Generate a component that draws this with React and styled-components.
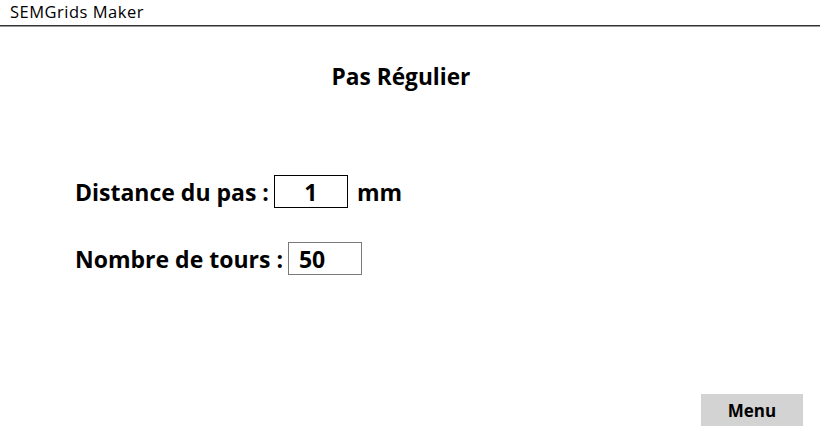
import React from 'react';
import styled, { createGlobalStyle } from 'styled-components';

const Global = createGlobalStyle`
  html, body { margin: 0; padding: 0; background: #fff; }
  body { font-family: "Open Sans", "Noto Sans", sans-serif; color: #000; }
`;

function Field({ label, value, align, unit, dark }) {
  return (
    <Row>
      <Label>{label}</Label>
      <Box align={align} dark={dark}>{value}</Box>
      {unit && <Unit>{unit}</Unit>}
    </Row>
  );
}

export default function App() {
  return (
    <Page>
      <Global />
      <TitleBar>SEMGrids Maker</TitleBar>
      <Content>
        <Heading>Pas Régulier</Heading>
        <Form>
          <Field label="Distance du pas :" value="1" align="center" unit="mm" dark />
          <Field label="Nombre de tours :" value="50" align="left" />
        </Form>
        <Footer>
          <MenuButton>Menu</MenuButton>
        </Footer>
      </Content>
    </Page>
  );
}

const Page = styled.div`
  width: 820px;
  height: 440px;
  display: flex;
  flex-direction: column;
  overflow: hidden;
`;

const TitleBar = styled.div`
  height: 26px;
  box-sizing: border-box;
  padding: 1px 0 0 10px;
  font-size: 16.5px;
  letter-spacing: 0.5px;
  line-height: 21px;
  border-bottom: 1px solid #333;
  box-shadow: 0 1px 0 #999;
`;

const Content = styled.div`
  flex: 1;
  display: flex;
  flex-direction: column;
`;

const Heading = styled.h1`
  margin: 37px 0 0;
  padding-right: 18px;
  text-align: center;
  font-size: 22.7px;
  line-height: 28px;
  font-weight: 700;
`;

const Form = styled.div`
  margin-top: 84px;
  padding-left: 75px;
  display: flex;
  flex-direction: column;
  gap: 34px;
`;

const Row = styled.div`
  display: flex;
  align-items: center;
  height: 33px;
  font-size: 23px;
  font-weight: 700;
`;

const Label = styled.span`
  margin-right: 5px;
`;

const Box = styled.div`
  width: 74px;
  height: 33px;
  box-sizing: border-box;
  border: 1px solid ${p => (p.dark ? '#000' : '#7a7a7a')};
  display: flex;
  align-items: center;
  justify-content: ${p => (p.align === 'center' ? 'center' : 'flex-start')};
  padding-left: ${p => (p.align === 'center' ? '0' : '10px')};
`;

const Unit = styled.span`
  margin-left: 9px;
`;

const Footer = styled.div`
  margin-top: auto;
  display: flex;
  justify-content: flex-end;
  padding: 0 17px 14px 0;
`;

const MenuButton = styled.button`
  width: 102px;
  height: 32px;
  border: none;
  background: #d3d3d3;
  font-family: inherit;
  font-size: 17px;
  font-weight: 700;
  color: #000;
  padding: 0;
`;
